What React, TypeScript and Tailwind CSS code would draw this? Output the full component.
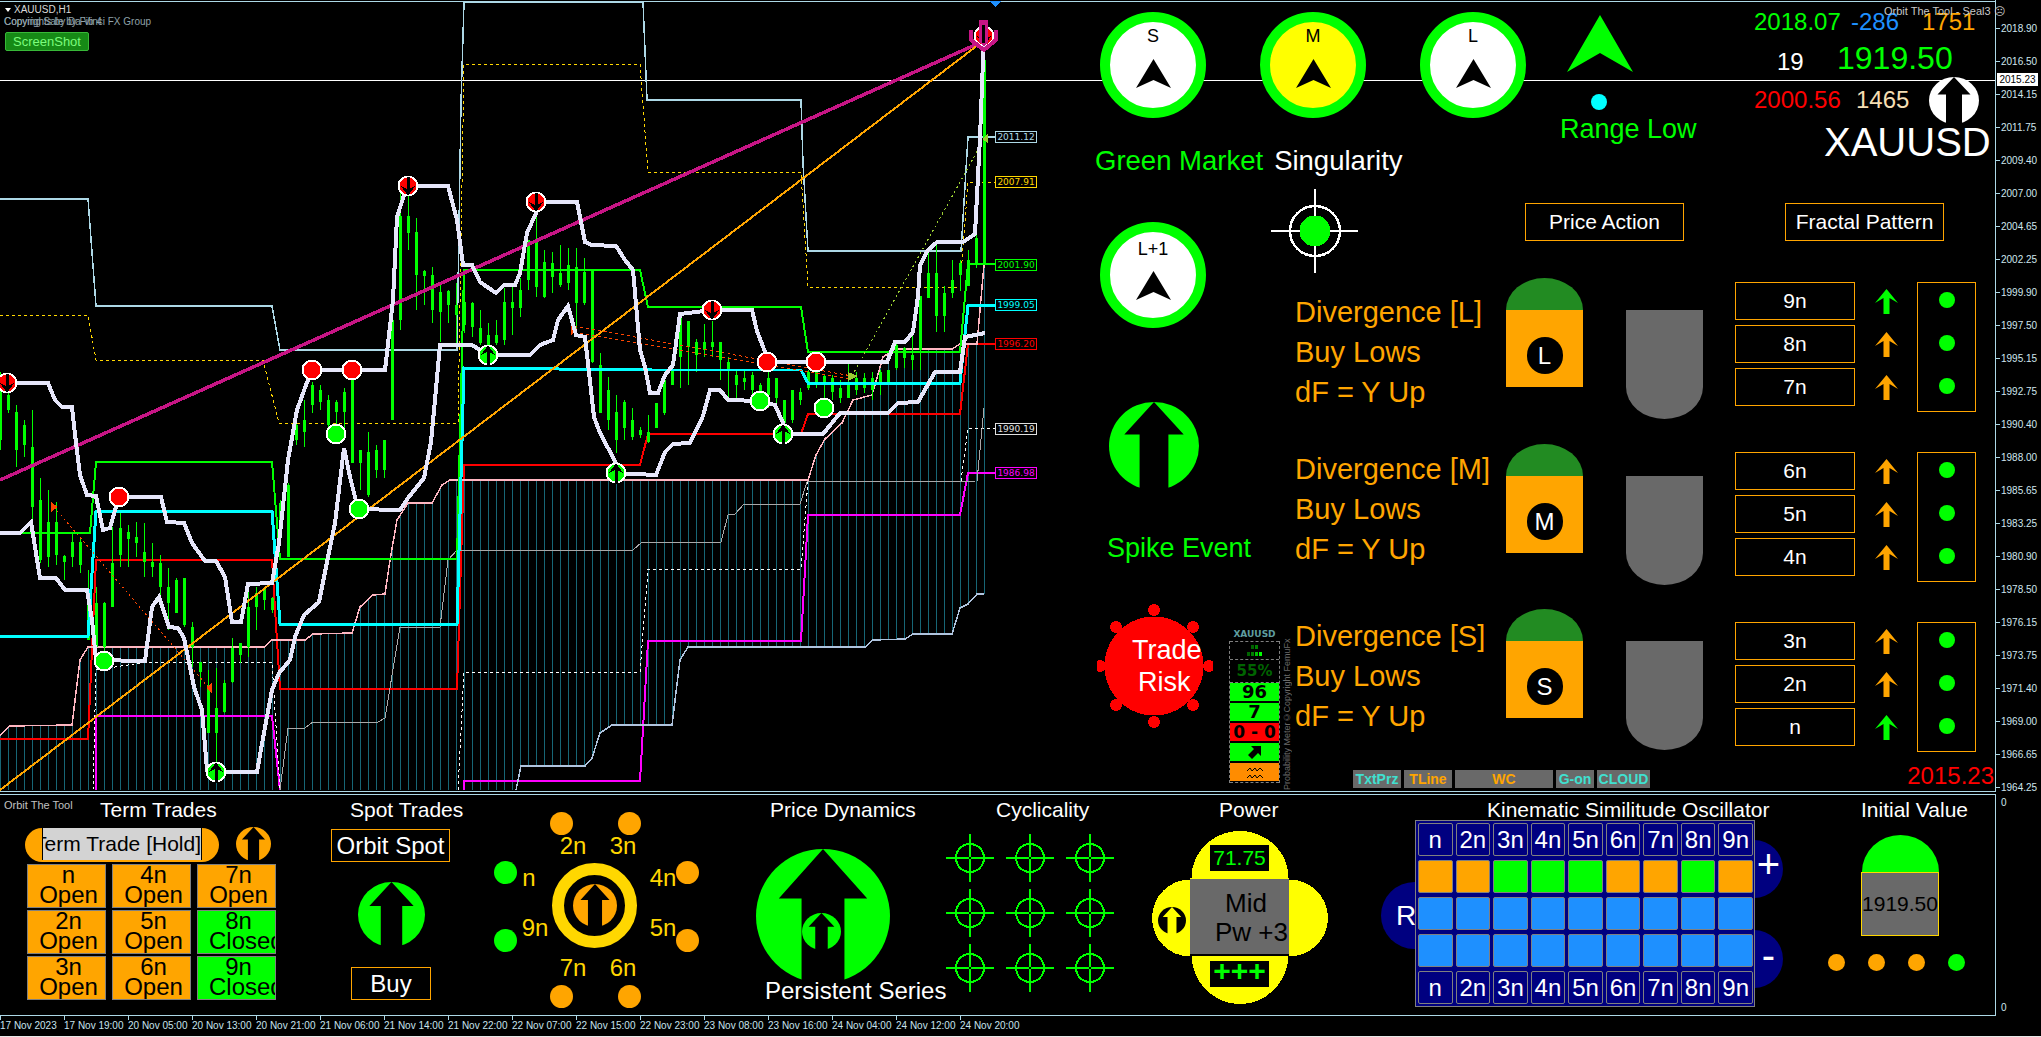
const LIME = "#00ff00";

// candle data: [high, low, bodyTop, bodyBottom] in chart pixels, one bar every 8px
const candles: number[][] = [
  [372,450,385,440],[392,413,395,410],[405,467,412,450],[420,457,425,445],[410,520,447,507],[478,563,500,560],[490,567,522,557],[502,565,522,555],
  [555,580,556,562],[533,567,542,557],[537,573,542,565],[570,640,590,640],[587,657,603,647],[602,657,603,647],[527,607,563,607],[513,567,528,555],
  [525,567,532,539],[522,557,537,543],[523,577,552,562],[543,577,562,567],[555,600,563,587],[568,630,587,603],[578,613,580,613],[578,627,578,625],
  [622,667,627,647],[662,687,662,672],[670,733,688,733],[668,767,708,733],[680,713,683,712],[638,683,648,682],[643,663,643,655],[583,657,607,647],
  [587,630,593,607],[587,610,588,600],[597,613,598,610],[500,545,503,530],[483,557,485,557],[420,445,425,440],[400,447,420,432],[382,413,385,405],
  [385,410,390,402],[395,440,400,425],[400,425,402,412],[388,433,392,412],[380,463,380,463],[450,490,450,463],[432,497,452,495],[445,478,450,470],
  [440,478,440,470],[287,420,320,420],[193,330,216,320],[195,250,216,233],[218,310,232,275],[270,305,271,276],[267,323,275,310],[283,342,292,312],
  [290,323,291,305],[283,343,305,315],[273,333,302,325],[302,337,303,327],[310,345,328,343],[323,347,335,345],[320,345,335,343],[288,345,302,340],
  [283,335,302,308],[278,317,290,308],[240,290,240,280],[213,297,242,287],[250,298,262,297],[252,293,263,277],[245,287,273,285],[248,290,265,283],
  [248,333,267,303],[258,305,272,303],[270,363,270,362],[353,413,365,413],[377,430,390,420],[395,453,412,440],[400,440,402,428],[408,440,420,437],
  [427,438,430,435],[415,443,432,442],[403,428,403,428],[380,415,380,413],[362,385,370,385],[316,388,316,357],[321,385,321,347],[339,372,342,355],
  [324,357,342,350],[321,357,342,347],[342,380,342,360],[357,400,362,370],[370,400,375,385],[370,390,378,382],[372,400,375,390],[383,400,385,395],
  [372,408,378,395],[378,403,378,398],[400,423,400,423],[390,423,390,420],[388,405,392,400],[370,390,372,388],[357,388,372,382],[375,403,376,385],
  [375,400,378,392],[380,403,388,398],[362,398,382,398],[372,395,378,390],[373,393,378,388],[372,400,378,390],[370,395,372,382],[370,385,370,385],
  [342,370,345,368],[347,368,348,358],[332,370,355,360],[296,370,296,350],[250,298,273,298],[242,332,273,316],[286,332,293,316],[260,298,280,293],
  [260,291,263,275],[250,286,260,286],[235,268,238,265],[50,263,60,263],
];

const pinkLine = [[0,735],[10,726],[72,725],[80,660],[88,647],[264,647],[272,640],[305,640],[313,634],[352,633],[360,607],[373,595],[385,594],[390,560],[397,520],[408,503],[432,503],[442,485],[450,480],[808,480],[816,455],[825,439],[842,423],[853,400],[872,395],[883,357],[895,349],[952,349],[960,344],[977,344],[980,310],[984,265]];
const floorLine = [[516,790],[521,766],[585,766],[592,758],[600,733],[612,725],[672,725],[680,660],[688,647],[865,647],[873,640],[905,639],[913,634],[952,634],[960,608],[968,604],[977,594],[984,594]];
const upperWhite = [[7,383],[48,383],[55,400],[62,407],[72,407],[76,443],[80,475],[87,495],[96,496],[103,530],[110,528],[118,500],[119,497],[161,497],[167,522],[184,523],[192,543],[205,561],[216,561],[225,577],[232,622],[241,622],[248,584],[272,583],[279,543],[288,460],[297,410],[306,385],[312,370],[385,370],[393,300],[397,217],[407,186],[448,186],[457,220],[463,265],[472,265],[480,282],[496,293],[504,285],[515,285],[520,273],[527,233],[536,213],[536,202],[577,202],[585,242],[592,245],[616,246],[625,260],[633,270],[640,350],[645,367],[650,393],[658,393],[665,375],[673,365],[680,314],[712,310],[752,310],[757,331],[765,352],[767,362],[887,362],[895,342],[905,342],[913,332],[918,296],[920,265],[928,250],[937,242],[963,242],[975,234],[980,138],[983,60],[984,35]];
const lowerWhite = [[0,533],[20,533],[31,522],[40,578],[56,578],[65,590],[87,590],[92,620],[96,660],[145,661],[152,607],[159,597],[169,627],[178,628],[184,638],[190,667],[194,687],[202,710],[207,770],[216,772],[257,772],[265,727],[272,690],[279,673],[290,660],[295,637],[304,615],[319,602],[328,557],[335,523],[344,448],[350,477],[358,509],[400,510],[408,498],[424,478],[431,442],[435,400],[440,345],[472,345],[488,355],[530,355],[540,345],[553,340],[558,320],[568,306],[576,335],[585,337],[594,417],[600,433],[616,463],[616,473],[656,475],[665,452],[673,444],[690,443],[703,416],[710,390],[720,390],[728,400],[760,401],[775,405],[783,423],[783,434],[823,434],[840,413],[888,413],[898,403],[918,402],[935,372],[960,372],[965,337],[985,333]];

const pts = (line: number[][]) => line.map((p) => p.join(",")).join(" ");

function yAt(line: number[][], x: number) {
  for (let i = 1; i < line.length; i++) {
    if (x <= line[i][0]) {
      const [x0, y0] = line[i - 1];
      const [x1, y1] = line[i];
      return x1 === x0 ? y1 : y0 + ((y1 - y0) * (x - x0)) / (x1 - x0);
    }
  }
  return line[line.length - 1][1];
}

function ChartMarker({ x, y, kind }: { x: number; y: number; kind: string }) {
  const fill = kind === "red" || kind === "down" ? "#ff0000" : LIME;
  return (
    <g transform={`translate(${x} ${y})`}>
      <circle r="10.5" fill="#fff" />
      <circle r="8.5" fill={fill} />
      {kind === "down" && <polygon fill="#000" points="0,10 -7,0 -1.5,3 -1.5,-9 1.5,-9 1.5,3 7,0" />}
      {kind === "up" && <polygon fill="#000" points="0,-10 7,0 1.5,-3 1.5,11 -1.5,11 -1.5,-3 -7,0" />}
    </g>
  );
}

function ChartSvg() {
  return (
    <svg width="1085" height="792" className="block" shapeRendering="crispEdges">
      {/* cloud hatching */}
      {candles.map((_, k) => {
        const x = k * 8;
        return <line key={k} x1={x} x2={x} y1={yAt(pinkLine, x)} y2={x < 516 ? 790 : yAt(floorLine, x)} stroke="#176675" />;
      })}
      {/* upper channel */}
      <polyline fill="none" stroke="#add8e6" strokeWidth="1.5" points="0,199 88,199 96,306 272,306 280,350 457,350 461,103 464,2 643,2 647,100 801,100 803,163 808,251 961,251 968,137 995,137" />
      <polyline fill="none" stroke="#ffd700" strokeDasharray="3 3" points="0,315 88,315 96,360 263,360 279,423 458,423 464,64 640,64 648,172 801,172 808,287 960,287 968,182 995,182" />
      <polyline fill="none" stroke="#ff0000" strokeWidth="2" points="0,739 88,739 96,560 272,560 280,689 457,689 464,465 640,465 648,434 801,434 808,414 960,414 968,344 995,344" />
      <polyline fill="none" stroke="#ff00ff" strokeWidth="2" points="96,790 96,716 272,716 280,790" />
      <polyline fill="none" stroke="#ff00ff" strokeWidth="2" points="464,790 464,781 640,781 648,641 801,641 808,515 960,515 968,473 995,473" />
      <polyline fill="none" stroke="#ffffff" strokeDasharray="3 3" points="93,790 96,670 147,662 272,662 280,790" />
      <polyline fill="none" stroke="#ffffff" strokeDasharray="3 3" points="458,790 464,672 640,672 648,569 801,569 808,481 961,481 968,428 995,428" />
      <polyline fill="none" stroke="#a9a9a9" points="280,790 288,728 305,728 313,722 378,722 385,718 400,627 440,627 448,560 457,550 633,550 642,542 721,542 728,515 735,514 744,504 800,504 807,482 977,481 984,408" />
      <polyline fill="none" stroke="#b0c4de" strokeWidth="1.5" points={pts(floorLine)} />
      <polyline fill="none" stroke="#ffb6c1" strokeWidth="1.5" points={pts(pinkLine)} />
      {/* candles */}
      {candles.map(([h, l, t, b], k) => {
        const x = k * 8;
        return (
          <g key={k} fill={LIME}>
            <rect x={x} y={h} width="1" height={l - h} />
            <rect x={x - 1} y={t} width="3" height={b - t} />
          </g>
        );
      })}
      <polyline fill="none" stroke={LIME} strokeWidth="2" points="0,533 90,533 96,462 272,462 280,559 457,559 464,270 640,270 648,307 801,307 808,352 960,352 968,264 995,264" />
      <polyline fill="none" stroke="#00ffff" strokeWidth="3" points="0,636 88,636 96,511 272,511 280,624 457,624 464,368 652,370 801,370 808,383 960,383 968,305 995,305" />
      <line x1="0" y1="480" x2="975" y2="45" stroke="#c71585" strokeWidth="3.5" />
      <line x1="0" y1="790" x2="978" y2="45" stroke="#ffa500" strokeWidth="2" />
      {/* signal trend lines */}
      <line x1="54" y1="507" x2="209" y2="688" stroke="#ff4500" strokeDasharray="2 3" />
      <line x1="574" y1="326" x2="852" y2="376" stroke="#ff4500" strokeDasharray="3 3" />
      <line x1="574" y1="332" x2="852" y2="379" stroke="#ff4500" strokeDasharray="3 3" />
      <line x1="852" y1="376" x2="984" y2="139" stroke="#9acd32" strokeDasharray="2 3" />
      <polygon fill="#ff4500" points="51,502 58,507 51,512" />
      <polygon fill="#ff4500" points="212,682 206,688 212,694" />
      <polygon fill="#ff4500" points="571,323 577,329 571,335" />
      <polygon fill="#9acd32" points="848,372 858,376 848,381" />
      <polygon fill="#9acd32" points="988,134 982,139 988,143" />
      <polyline fill="none" stroke="#e6e6fa" strokeWidth="4" points={pts(upperWhite)} />
      <polyline fill="none" stroke="#e6e6fa" strokeWidth="4" points={pts(lowerWhite)} />
      {/* markers */}
      <ChartMarker x={119} y={497} kind="red" />
      <ChartMarker x={312} y={370} kind="red" />
      <ChartMarker x={352} y={370} kind="red" />
      <ChartMarker x={767} y={362} kind="red" />
      <ChartMarker x={816} y={362} kind="red" />
      <ChartMarker x={104} y={661} kind="green" />
      <ChartMarker x={336} y={434} kind="green" />
      <ChartMarker x={359} y={509} kind="green" />
      <ChartMarker x={760} y={401} kind="green" />
      <ChartMarker x={824} y={408} kind="green" />
      <ChartMarker x={7} y={383} kind="down" />
      <ChartMarker x={408} y={186} kind="down" />
      <ChartMarker x={536} y={202} kind="down" />
      <ChartMarker x={712} y={310} kind="down" />
      <ChartMarker x={488} y={355} kind="up" />
      <ChartMarker x={216} y={772} kind="up" />
      <ChartMarker x={616} y={473} kind="up" />
      <ChartMarker x={783} y={434} kind="up" />
      <ChartMarker x={984} y={36} kind="down" />
      <polyline fill="none" stroke="#c71585" strokeWidth="4" points="971,30 971,40 984,50 996,40 996,30" />
      <polygon fill="#c71585" points="979,20 988,20 988,42 984,46 979,42" />
      <rect x="982" y="25" width="3" height="18" fill="#000" />
      <polygon fill="#1e90ff" points="989,1 1001,1 995,7" />
    </svg>
  );
}

const priceTags = [
  { text: "2011.12", cls: "top-[131px] border-[#add8e6] text-[#add8e6]" },
  { text: "2007.91", cls: "top-[176px] border-[#ffd700] text-[#ffd700]" },
  { text: "2001.90", cls: "top-[259px] border-[#00ff00] text-[#00ff00]" },
  { text: "1999.05", cls: "top-[299px] border-[#00ffff] text-[#00ffff]" },
  { text: "1996.20", cls: "top-[338px] border-[#ff0000] text-[#ff0000]" },
  { text: "1990.19", cls: "top-[423px] border-[#e0e0e0] text-[#e0e0e0]" },
  { text: "1986.98", cls: "top-[467px] border-[#ff00ff] text-[#ff00ff]" },
];

function ArrowDisc({ disc, arrow, cls }: { disc: string; arrow: string; cls: string }) {
  return (
    <svg viewBox="0 0 100 100" preserveAspectRatio="none" className={cls}>
      <circle cx="50" cy="50" r="50" fill={disc} />
      <polygon fill={arrow} points="50,0 83,37 66,37 66,100 34,100 34,37 17,37" />
    </svg>
  );
}

function Compass({ label, inner, labelCls, arrowCls }: { label: string; inner: string; labelCls: string; arrowCls: string }) {
  return (
    <div className={`w-[106px] h-[106px] rounded-full border-[10px] border-[#00ff00] flex flex-col items-center ${inner}`}>
      <span className={`text-[18px] leading-[18px] text-black ${labelCls}`}>{label}</span>
      <svg width="35" height="29" viewBox="0 0 35 29" className={arrowCls}>
        <polygon points="17.5,0 35,29 17.5,21 0,29" fill="#000" />
      </svg>
    </div>
  );
}

function MiniArrow({ color }: { color: string }) {
  return (
    <svg width="23" height="25" viewBox="0 0 23 25" className="ml-[20px]">
      <polygon fill={color} points="11.5,0 23,14 14.5,9 14.5,25 8.5,25 8.5,9 0,14" />
    </svg>
  );
}

function SignalRow({ name, tag, textCls, boxCls, rowCls, levels }: {
  name: string; tag: string; textCls: string; boxCls: string; rowCls: string;
  levels: { n: string; color: string }[];
}) {
  return (
    <div className={`flex ${rowCls}`}>
      <div className={`w-[211px] text-[29px] leading-[40px] text-[#ffa500] ${textCls}`}>
        <div>Divergence [{name}]</div>
        <div>Buy Lows</div>
        <div>dF = Y Up</div>
      </div>
      <div className="w-[77px]">
        <div className="h-[32px] bg-[#228b22] rounded-t-[38.5px_32px]" />
        <div className="h-[77px] bg-[#ffa500] flex items-center justify-center pt-[14px]">
          <div className="w-[36px] h-[37px] rounded-full bg-black text-white text-[24px] flex items-center justify-center">{tag}</div>
        </div>
      </div>
      <div className="w-[77px] h-[109px] mt-[32px] ml-[43px] bg-[#696969] rounded-b-[38.5px_32px]" />
      <div className={`ml-[32px] flex ${boxCls}`}>
        <div className="flex flex-col gap-[5px]">
          {levels.map((l) => (
            <div key={l.n} className="flex items-center">
              <div className="w-[120px] h-[38px] border border-[#ffa500] text-white text-[21px] flex items-center justify-center">{l.n}</div>
              <MiniArrow color={l.color} />
            </div>
          ))}
        </div>
        <div className="w-[59px] h-[130px] ml-[19px] border border-[#ffa500] flex flex-col items-center gap-[27px] pt-[9px]">
          <div className="w-[16px] h-[16px] rounded-full bg-[#00ff00]" />
          <div className="w-[16px] h-[16px] rounded-full bg-[#00ff00]" />
          <div className="w-[16px] h-[16px] rounded-full bg-[#00ff00]" />
        </div>
      </div>
    </div>
  );
}

function ProbabilityMeter() {
  return (
    <div className="w-[51px] ml-[16px] mt-[24px] flex flex-col items-center">
      <div className="font-['DejaVu_Sans',sans-serif] font-bold text-[9px] leading-[13px] text-[#5f9ea0]">XAUUSD</div>
      <div className="w-full border-x border-dashed border-[#808080] font-['DejaVu_Sans',sans-serif] font-bold text-black text-center">
        <div className="h-[18px] border-t border-dashed border-[#808080] flex flex-col items-center gap-[3px] pt-[3px]">
          <div className="flex gap-[1px]">
            <div className="w-[3px] h-[4px] bg-[#006400]" />
            <div className="w-[3px] h-[4px] bg-[#008000]" />
          </div>
          <div className="flex gap-[1px]">
            <div className="w-[3px] h-[4px] bg-[#006400]" />
            <div className="w-[3px] h-[4px] bg-[#008000]" />
            <div className="w-[3px] h-[4px] bg-[#00c000]" />
            <div className="w-[3px] h-[4px] bg-[#00ff00]" />
          </div>
        </div>
        <div className="h-[24px] border-y border-dashed border-[#808080] text-[15px] leading-[22px] text-[#006400]">55%</div>
        <div className="h-[18px] bg-[#00ff00] text-[18px] leading-[18px]">96</div>
        <div className="h-[18px] mt-[2px] bg-[#00ff00] text-[18px] leading-[18px]">7</div>
        <div className="h-[18px] mt-[2px] bg-[#ff0000] text-[17px] leading-[18px] whitespace-nowrap">0 - 0</div>
        <div className="h-[18px] mt-[2px] bg-[#00ff00] flex items-center justify-center">
          <svg width="14" height="14" viewBox="0 0 14 14">
            <polygon fill="#000" points="3,1 13,1 13,11 10,8 4,14 0,10 6,4" />
          </svg>
        </div>
        <div className="h-[18px] mt-[2px] bg-[#ff8c00] flex items-center justify-center">
          <svg width="16" height="13" viewBox="0 0 16 13" fill="none" stroke="#000">
            <polyline points="0,5 3,2 5,5 8,2 10,5 13,2 16,5" />
            <polyline points="0,12 3,9 5,12 8,9 10,12 13,9 16,12" />
          </svg>
        </div>
        <div className="h-[2px] border-b border-dashed border-[#808080]" />
      </div>
    </div>
  );
}

function TradeRisk() {
  return (
    <div className="relative w-[116px] h-[124px] ml-[12px]">
      <svg width="116" height="124" viewBox="0 0 116 124" className="absolute inset-0" shapeRendering="crispEdges">
        <circle cx="57" cy="62" r="49.5" fill="#ff0000" />
        <circle cx="57" cy="6" r="6" fill="#ff0000" />
        <circle cx="57" cy="118" r="6" fill="#ff0000" />
        <circle cx="3" cy="62" r="6" fill="#ff0000" />
        <circle cx="112" cy="62" r="6" fill="#ff0000" />
        <circle cx="19" cy="23" r="6" fill="#ff0000" />
        <circle cx="96" cy="23" r="6" fill="#ff0000" />
        <circle cx="19" cy="101" r="6" fill="#ff0000" />
        <circle cx="96" cy="101" r="6" fill="#ff0000" />
      </svg>
      <div className="relative pt-[30px] pl-[35px] text-[27px] leading-[32px] text-white">
        <div>Trade</div>
        <div className="pl-[6px]">Risk</div>
      </div>
    </div>
  );
}

function Header() {
  return (
    <div className="flex h-[189px]">
      <div className="w-[475px] pl-[10px]">
        <div className="flex gap-[54px] ml-[5px] pt-[12px]">
          <Compass label="S" inner="bg-white" labelCls="mt-[5px]" arrowCls="mt-[14px]" />
          <Compass label="M" inner="bg-[#ffff00]" labelCls="mt-[5px]" arrowCls="mt-[14px]" />
          <Compass label="L" inner="bg-white" labelCls="mt-[5px]" arrowCls="mt-[14px]" />
        </div>
        <div className="mt-[27px] flex gap-[11px] text-[27.5px] leading-[32px] whitespace-nowrap">
          <span className="text-[#00ff00]">Green Market</span>
          <span className="text-white">Singularity</span>
        </div>
      </div>
      <div className="w-[170px] flex flex-col">
        <svg width="66" height="57" viewBox="0 0 66 57" className="ml-[7px] mt-[15px]">
          <polygon points="33,0 66,57 33,38 0,57" fill="#00ff00" />
        </svg>
        <div className="w-[16px] h-[16px] rounded-full bg-[#00ffff] ml-[31px] mt-[22px]" />
        <div className="mt-[3px] text-[27px] leading-[32px] text-[#00ff00] whitespace-nowrap">Range Low</div>
      </div>
      <div className="relative flex-1 pl-[24px] pt-[8px] whitespace-nowrap text-[24px]">
        <div className="absolute top-[5px] left-[154px] text-[11px] leading-[12px] text-[#c8c8c8]">Orbit The Tool - Seal3 ☹</div>
        <div className="flex h-[28px] leading-[28px]">
          <span className="w-[97px] text-[#00ff00]">2018.07</span>
          <span className="w-[71px] text-[#1e90ff]">-286</span>
          <span className="text-[#ffa500]">1751</span>
        </div>
        <div className="flex h-[44px]">
          <span className="ml-[23px] w-[60px] mt-[12px] leading-[28px] text-white">19</span>
          <span className="mt-[4px] text-[32px] leading-[36px] text-[#00ff00]">1919.50</span>
        </div>
        <div className="flex h-[39px] leading-[40px]">
          <span className="w-[102px] text-[#ff0000]">2000.56</span>
          <span className="w-[73px] text-[#f5deb3]">1465</span>
          <ArrowDisc disc="#ffffff" arrow="#000000" cls="w-[50px] h-[47px] -mt-[3px] relative" />
        </div>
        <div className="ml-[70px] text-[40px] leading-[46px] text-white">XAUUSD</div>
      </div>
    </div>
  );
}

function ChartOverlay() {
  return (
    <>
      <div className="absolute top-[4px] left-[5px] flex items-center gap-[3px] text-[10px] leading-[12px] text-[#d8d8d8]">
        <span className="w-0 h-0 border-x-[3px] border-x-transparent border-t-[4px] border-t-white" />
        <span>XAUUSD,H1</span>
      </div>
      <div className="absolute top-[16px] left-[4px] text-[10px] leading-[12px] text-[#8fa0a8] whitespace-nowrap">Copyrights by Da Vinci FX Group</div>
      <div className="absolute top-[16px] left-[4px] text-[10px] leading-[12px] text-[#8fa0a8] whitespace-nowrap">Copying Sale by Fib 4</div>
      <div className="absolute top-[32px] left-[5px] w-[84px] h-[19px] rounded-[2px] bg-[#168a16] border border-[#38b838] text-[13px] leading-[17px] text-[#7cfc7c] text-center">ScreenShot</div>
      {priceTags.map((t) => (
        <div key={t.text} className={`absolute left-[995px] w-[42px] h-[12px] border bg-black text-center font-['DejaVu_Sans',sans-serif] text-[9px] leading-[10px] ${t.cls}`}>{t.text}</div>
      ))}
    </>
  );
}

function Panel() {
  return (
    <div className="relative flex-1 flex flex-col">
      <Header />
      <div className="flex flex-1">
        <div className="w-[210px] flex flex-col">
          <div className="ml-[15px] mt-[33px]">
            <Compass label="L+1" inner="bg-white" labelCls="mt-[8px]" arrowCls="mt-[13px]" />
          </div>
          <ArrowDisc disc="#00ff00" arrow="#000000" cls="w-[90px] h-[88px] ml-[24px] mt-[74px]" />
          <div className="ml-[22px] mt-[42px] text-[27px] leading-[32px] text-[#00ff00] whitespace-nowrap">Spike Event</div>
          <div className="flex mt-[40px]">
            <TradeRisk />
            <ProbabilityMeter />
            <div className="ml-[2px] mt-[39px] h-[147px] [writing-mode:vertical-rl] rotate-180 text-[9px] leading-[10px] text-[#6a6a6a] whitespace-nowrap">Probability Meter©Copyright FemuFx</div>
          </div>
        </div>
        <div className="flex-1 flex flex-col">
          <div className="flex h-[89px]">
            <svg width="87" height="84" viewBox="0 0 87 84" className="-ml-[24px] shrink-0" shapeRendering="crispEdges">
              <line x1="44" y1="0" x2="44" y2="84" stroke="#fff" strokeWidth="2" />
              <line x1="0" y1="42" x2="87" y2="42" stroke="#fff" strokeWidth="2" />
              <circle cx="44" cy="42" r="25" fill="none" stroke="#fff" strokeWidth="2.5" />
              <circle cx="44" cy="42" r="15.5" fill="#00ff00" />
            </svg>
            <div className="ml-[167px] mt-[14px] w-[159px] h-[38px] border border-[#ffa500] text-white text-[21px] flex items-center justify-center">Price Action</div>
            <div className="ml-[101px] mt-[14px] w-[159px] h-[38px] border border-[#ffa500] text-white text-[21px] flex items-center justify-center">Fractal Pattern</div>
          </div>
          <SignalRow name="L" tag="L" rowCls="h-[166px]" textCls="pt-[14px]" boxCls="mt-[4px]" levels={[{ n: "9n", color: "#00ff00" }, { n: "8n", color: "#ffa500" }, { n: "7n", color: "#ffa500" }]} />
          <SignalRow name="M" tag="M" rowCls="h-[165px]" textCls="pt-[5px]" boxCls="mt-[8px]" levels={[{ n: "6n", color: "#ffa500" }, { n: "5n", color: "#ffa500" }, { n: "4n", color: "#ffa500" }]} />
          <SignalRow name="S" tag="S" rowCls="h-[159px]" textCls="pt-[7px]" boxCls="mt-[13px]" levels={[{ n: "3n", color: "#ffa500" }, { n: "2n", color: "#ffa500" }, { n: "n", color: "#00ff00" }]} />
          <div className="flex items-start pl-[58px] pr-[1px] h-[22px]">
            <div className="mt-[2px] flex gap-[3px] h-[18px] text-[14px] leading-[18px] font-bold text-center">
              <div className="w-[48px] bg-[#696969] text-[#40e0d0]">TxtPrz</div>
              <div className="w-[48px] bg-[#696969] text-[#ffa500]">TLine</div>
              <div className="w-[98px] bg-[#696969] text-[#ffa500]">WC</div>
              <div className="w-[38px] bg-[#696969] text-[#40e0d0]">G-on</div>
              <div className="w-[53px] bg-[#696969] text-[#40e0d0]">CLOUD</div>
            </div>
            <div className="ml-auto shrink-0 whitespace-nowrap text-[24px] leading-[16px] text-[#ff0000]">2015.23</div>
          </div>
        </div>
      </div>
    </div>
  );
}

function PriceAxis() {
  const prices = ["2018.90","2016.50","2014.15","2011.75","2009.40","2007.00","2004.65","2002.25","1999.90","1997.50","1995.15","1992.75","1990.40","1988.00","1985.65","1983.25","1980.90","1978.50","1976.15","1973.75","1971.40","1969.00","1966.65","1964.25"];
  return (
    <div className="relative w-[45px] pt-[12px]">
      {prices.map((p) => (
        <div key={p} className="flex items-center h-[33px] text-[10px] text-[#cfe6ee]">
          <div className="w-[4px] h-px bg-[#add8e6] mr-[1px]" />
          {p}
        </div>
      ))}
      <div className="absolute top-[73px] left-[1px] w-[41px] h-[13px] bg-white text-black text-[10px] leading-[13px] text-center">2015.23</div>
    </div>
  );
}

function TimeAxis() {
  const stamps = ["17 Nov 2023","17 Nov 19:00","20 Nov 05:00","20 Nov 13:00","20 Nov 21:00","21 Nov 06:00","21 Nov 14:00","21 Nov 22:00","22 Nov 07:00","22 Nov 15:00","22 Nov 23:00","23 Nov 08:00","23 Nov 16:00","24 Nov 04:00","24 Nov 12:00","24 Nov 20:00"];
  return (
    <div className="flex h-[21px] border-b border-[#e8e8e8]">
      {stamps.map((s) => (
        <div key={s} className="w-[64px] text-[10px] leading-[12px] text-[#c8e4ee] whitespace-nowrap">
          <div className="w-px h-[4px] bg-[#add8e6]" />
          {s}
        </div>
      ))}
    </div>
  );
}

function SectionTitle({ cls, children }: { cls: string; children: string }) {
  return <div className={`text-[21px] leading-[24px] text-white whitespace-nowrap ${cls}`}>{children}</div>;
}

function TermCell({ n, state }: { n: string; state: "Open" | "Closed" }) {
  const open = state === "Open";
  return (
    <div className={`h-[44px] border border-[#808080] overflow-hidden text-black text-[24px] leading-[20px] whitespace-nowrap ${open ? "bg-[#ffa500]" : "bg-[#00ff00]"}`}>
      <div className="text-center pl-[4px]">{n}</div>
      <div className={open ? "text-center pl-[4px]" : "pl-[11px]"}>{state}</div>
    </div>
  );
}

function TermTrades() {
  return (
    <div className="w-[320px] pt-[3px]">
      <SectionTitle cls="pl-[100px]">Term Trades</SectionTitle>
      <div className="flex ml-[25px] mt-[6px]">
        <div className="relative w-[194px] h-[34px] rounded-full bg-[#ffa500] flex justify-center">
          <div className="w-[160px] h-[32px] bg-[#d3d3d3] border-x border-black text-[21px] leading-[32px] text-black whitespace-nowrap overflow-hidden flex justify-end">Term Trade [Hold]</div>
        </div>
        <ArrowDisc disc="#ffa500" arrow="#000000" cls="w-[35px] h-[34px] ml-[17px] -mt-[1px]" />
      </div>
      <div className="grid grid-cols-[79px_79px_79px] gap-x-[6px] gap-y-[2px] ml-[27px] mt-[2px]">
        <TermCell n="n" state="Open" />
        <TermCell n="4n" state="Open" />
        <TermCell n="7n" state="Open" />
        <TermCell n="2n" state="Open" />
        <TermCell n="5n" state="Open" />
        <TermCell n="8n" state="Closed" />
        <TermCell n="3n" state="Open" />
        <TermCell n="6n" state="Open" />
        <TermCell n="9n" state="Closed" />
      </div>
    </div>
  );
}

function SpotTrades() {
  return (
    <div className="w-[170px] pt-[3px]">
      <SectionTitle cls="pl-[30px]">Spot Trades</SectionTitle>
      <div className="w-[119px] h-[33px] ml-[11px] mt-[7px] border border-[#ffa500] text-white text-[24px] flex items-center justify-center">Orbit Spot</div>
      <ArrowDisc disc="#00ff00" arrow="#000000" cls="w-[67px] h-[65px] ml-[38px] mt-[20px]" />
      <div className="w-[80px] h-[33px] ml-[31px] mt-[20px] border border-[#ffa500] text-white text-[24px] flex items-center justify-center">Buy</div>
    </div>
  );
}

function OrbitDial() {
  const label = "absolute w-[40px] h-[24px] text-center text-[24px] leading-[24px] text-[#ffd700]";
  const dot = "absolute w-[23px] h-[23px] rounded-full";
  return (
    <div className="relative w-[265px]">
      <div className={`${dot} left-[60px] top-[17px] bg-[#ffa500]`} />
      <div className={`${dot} left-[128px] top-[17px] bg-[#ffa500]`} />
      <div className={`${dot} left-[186px] top-[66px] bg-[#ffa500]`} />
      <div className={`${dot} left-[186px] top-[134px] bg-[#ffa500]`} />
      <div className={`${dot} left-[128px] top-[190px] bg-[#ffa500]`} />
      <div className={`${dot} left-[60px] top-[190px] bg-[#ffa500]`} />
      <div className={`${dot} left-[4px] top-[134px] bg-[#00ff00]`} />
      <div className={`${dot} left-[4px] top-[66px] bg-[#00ff00]`} />
      <div className={`${label} left-[63px] top-[39px]`}>2n</div>
      <div className={`${label} left-[113px] top-[39px]`}>3n</div>
      <div className={`${label} left-[153px] top-[71px]`}>4n</div>
      <div className={`${label} left-[153px] top-[121px]`}>5n</div>
      <div className={`${label} left-[113px] top-[161px]`}>6n</div>
      <div className={`${label} left-[63px] top-[161px]`}>7n</div>
      <div className={`${label} left-[25px] top-[121px]`}>9n</div>
      <div className={`${label} left-[19px] top-[71px]`}>n</div>
      <div className="absolute left-[62px] top-[68px] w-[85px] h-[85px] rounded-full border-[12px] border-[#ffd700] flex items-center justify-center">
        <ArrowDisc disc="#ffa500" arrow="#000000" cls="w-[44px] h-[43px]" />
      </div>
    </div>
  );
}

function PriceDynamics() {
  return (
    <div className="w-[190px] pt-[3px]">
      <SectionTitle cls="pl-[15px]">Price Dynamics</SectionTitle>
      <div className="relative w-[134px] h-[134px] ml-[1px] mt-[27px]">
        <ArrowDisc disc="#00ff00" arrow="#000000" cls="w-[134px] h-[134px]" />
        <ArrowDisc disc="#00ff00" arrow="#000000" cls="absolute left-[46px] top-[64px] w-[39px] h-[37px]" />
      </div>
      <div className="relative ml-[10px] -mt-[4px] text-[24px] leading-[24px] text-white whitespace-nowrap">Persistent Series</div>
    </div>
  );
}

function CycleTarget() {
  return (
    <svg width="48" height="48" viewBox="0 0 48 48" shapeRendering="crispEdges">
      <circle cx="24" cy="24" r="14" fill="none" stroke="#00ff00" strokeWidth="2" />
      <line x1="0" y1="24" x2="48" y2="24" stroke="#00ff00" strokeWidth="2" />
      <line x1="24" y1="0" x2="24" y2="48" stroke="#00ff00" strokeWidth="2" />
      <rect x="23" y="23" width="2" height="2" fill="#000" />
    </svg>
  );
}

function Cyclicality() {
  return (
    <div className="w-[205px] pt-[3px]">
      <SectionTitle cls="pl-[51px]">Cyclicality</SectionTitle>
      <div className="grid grid-cols-[48px_48px_48px] gap-x-[12px] gap-y-[7px] ml-[1px] mt-[12px]">
        {[0, 1, 2, 3, 4, 5, 6, 7, 8].map((i) => (
          <CycleTarget key={i} />
        ))}
      </div>
    </div>
  );
}

function Power() {
  return (
    <div className="w-[190px] pt-[3px]">
      <SectionTitle cls="pl-[69px]">Power</SectionTitle>
      <div className="relative w-[176px] h-[173px] ml-[2px] mt-[9px]">
        <svg width="176" height="173" viewBox="0 0 176 173" className="absolute inset-0" shapeRendering="crispEdges">
          <ellipse cx="88" cy="47" rx="48.5" ry="47" fill="#ffff00" />
          <ellipse cx="88" cy="123" rx="48.5" ry="50" fill="#ffff00" />
          <ellipse cx="38" cy="87" rx="38" ry="38.5" fill="#ffff00" />
          <ellipse cx="137" cy="87" rx="39" ry="38.5" fill="#ffff00" />
        </svg>
        <ArrowDisc disc="#000000" arrow="#ffff00" cls="absolute left-[6px] top-[76px] w-[28px] h-[27px]" />
        <div className="relative ml-[38px] w-[99px] flex flex-col items-center pt-[14px]">
          <div className="w-[59px] h-[26px] bg-black text-[#00ff00] text-[21px] leading-[26px] text-center">71.75</div>
          <div className="w-full h-[76px] mt-[7px] bg-[#696969] border-t border-[#ffff00] text-[26px] leading-[29px] text-black whitespace-nowrap overflow-hidden pt-[10px]">
            <div className="pl-[35px]">Mid</div>
            <div className="pl-[25px]">Pw +3</div>
          </div>
          <div className="w-full h-[2px] bg-black" />
          <div className="w-[59px] h-[26px] mt-[5px] bg-black text-[#00ff00] font-bold text-[30px] leading-[20px] text-center whitespace-nowrap overflow-hidden">+++</div>
        </div>
      </div>
    </div>
  );
}

function Kinematic() {
  const labels = ["n", "2n", "3n", "4n", "5n", "6n", "7n", "8n", "9n"];
  const states = ["o", "o", "g", "g", "g", "o", "o", "g", "o"];
  const cell = "h-[33px] rounded-[2px] border border-[#808080]";
  return (
    <div className="w-[460px] pt-[3px]">
      <SectionTitle cls="pl-[147px]">Kinematic Similitude Oscillator</SectionTitle>
      <div className="relative w-[340px] ml-[75px] -mt-[2px]">
        <div className="absolute -left-[34px] top-[62px] w-[67px] h-[67px] rounded-full bg-[#000080] text-white text-[28px] leading-[67px] pl-[15px]">R</div>
        <div className="absolute -right-[28px] top-[20px] w-[58px] h-[58px] rounded-full bg-[#000080] text-white text-[40px] leading-[48px] text-right pr-[3px]">+</div>
        <div className="absolute -right-[28px] top-[110px] w-[58px] h-[58px] rounded-full bg-[#000080] text-white text-[40px] leading-[50px] text-right pr-[8px]">-</div>
        <div className="relative h-[187px] border border-[#808080] bg-[#000080] grid grid-cols-9 gap-x-[3px] gap-y-[4px] p-[2px] pr-[1px]">
          {labels.map((l) => (
            <div key={l} className={`${cell} text-white text-[24px] leading-[31px] text-center`}>{l}</div>
          ))}
          {states.map((s, i) => (
            <div key={i} className={`${cell} ${s === "g" ? "bg-[#00ff00]" : "bg-[#ffa500]"}`} />
          ))}
          {labels.map((l) => (
            <div key={l} className={`${cell} bg-[#1e90ff]`} />
          ))}
          {labels.map((l) => (
            <div key={l} className={`${cell} bg-[#1e90ff]`} />
          ))}
          {labels.map((l) => (
            <div key={l} className={`${cell} text-white text-[24px] leading-[31px] text-center`}>{l}</div>
          ))}
        </div>
      </div>
    </div>
  );
}

function InitialValue() {
  return (
    <div className="w-[195px] pt-[3px]">
      <SectionTitle cls="pl-[61px]">Initial Value</SectionTitle>
      <div className="w-[77px] h-[37px] ml-[62px] mt-[13px] bg-[#00ff00] rounded-t-[38.5px_37px]" />
      <div className="w-[78px] h-[64px] ml-[61px] bg-[#696969] border border-[#ffd700] text-black text-[21px] flex items-center justify-center">1919.50</div>
      <div className="flex gap-[23px] ml-[28px] mt-[18px]">
        <div className="w-[17px] h-[17px] rounded-full bg-[#ffa500]" />
        <div className="w-[17px] h-[17px] rounded-full bg-[#ffa500]" />
        <div className="w-[17px] h-[17px] rounded-full bg-[#ffa500]" />
        <div className="w-[17px] h-[17px] rounded-full bg-[#00ff00]" />
      </div>
    </div>
  );
}

export default function App() {
  return (
    <div className="w-[2041px] h-[1037px] bg-black flex flex-col overflow-hidden font-['Liberation_Sans',Arial,sans-serif]">
      {/* main chart window */}
      <div className="flex h-[792px]">
        <div className="relative flex w-[1996px] border-r border-b border-[#add8e6]">
          <div className="absolute top-[1px] inset-x-0 h-px bg-[#add8e6]" />
          <div className="absolute top-[80px] inset-x-0 h-px bg-white" />
          <div className="relative w-[1085px] shrink-0">
            <ChartSvg />
            <ChartOverlay />
          </div>
          <Panel />
        </div>
        <PriceAxis />
      </div>

      {/* indicator window */}
      <div className="flex h-[222px] mt-[2px]">
        <div className="relative flex w-[1996px] border border-l-0 border-[#add8e6]">
          <div className="absolute top-[3px] left-[4px] text-[11px] leading-[14px] text-[#c0c0c0]">Orbit The Tool</div>
          <TermTrades />
          <SpotTrades />
          <OrbitDial />
          <PriceDynamics />
          <Cyclicality />
          <Power />
          <Kinematic />
          <InitialValue />
        </div>
        <div className="flex flex-col justify-between py-[1px] pl-[5px] text-[10px] text-[#cfe6ee]">
          <span>0</span>
          <span>0</span>
        </div>
      </div>

      <TimeAxis />
    </div>
  );
}
